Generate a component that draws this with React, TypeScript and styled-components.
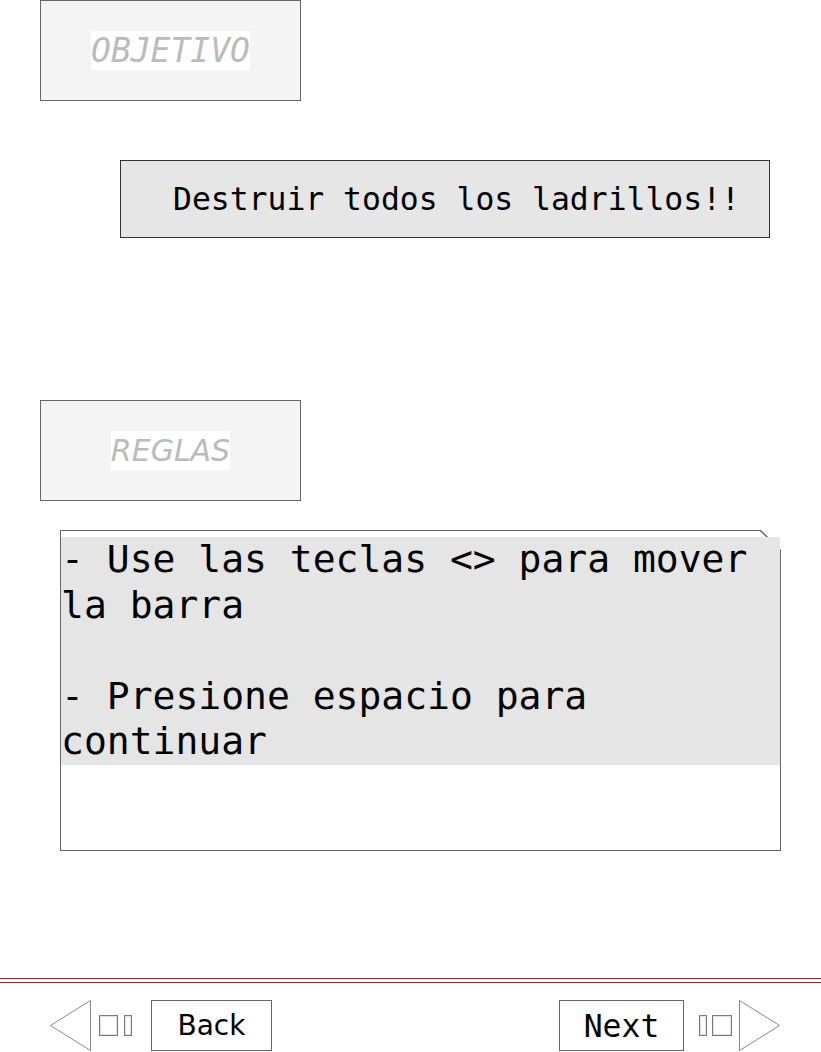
import React from "react";
import styled, { createGlobalStyle } from "styled-components";

const Global = createGlobalStyle`
  html, body { margin: 0; padding: 0; background: #ffffff; }
  body { font-family: "DejaVu Sans Mono", monospace; color: #000; }
`;

const Page = styled.div`
  display: flex;
  flex-direction: column;
  width: 821px;
  height: 1052px;
  overflow: hidden;
`;

const LabelBox = styled.div<{ $top: number }>`
  box-sizing: border-box;
  margin: ${(p) => p.$top}px 0 0 40px;
  width: 261px;
  height: 101px;
  border: 1px solid #666;
  background: #f4f4f4;
  display: flex;
  align-items: center;
  justify-content: center;
`;

const LabelText = styled.span<{ $mono?: boolean }>`
  font-family: ${(p) => (p.$mono ? '"DejaVu Sans Mono", monospace' : '"DejaVu Sans", sans-serif')};
  font-style: italic;
  font-size: ${(p) => (p.$mono ? "33px" : "30px")};
  line-height: 39px;
  color: #bbbbbb;
  background: #ffffff;
  white-space: nowrap;
`;

const GoalBox = styled.div`
  box-sizing: border-box;
  margin: 59px 0 0 120px;
  width: 650px;
  height: 78px;
  border: 1px solid #333;
  background: #e6e6e6;
  display: flex;
  align-items: center;
  padding-left: 52px;
  font-size: 31.4px;
  white-space: nowrap;
`;

const RulesBox = styled.div`
  position: relative;
  box-sizing: border-box;
  margin: 29px 0 0 60px;
  width: 721px;
  height: 321px;
  border: 1px solid #666;
  background: #fff;
`;

const FoldCorner = styled.div`
  position: absolute;
  top: -1px;
  right: -1px;
  width: 21px;
  height: 21px;
  background: linear-gradient(
    to top right,
    transparent calc(50% - 1px),
    #666 calc(50% - 0.5px),
    #666 calc(50% + 0.5px),
    #fff calc(50% + 1px)
  );
`;

const RulesText = styled.div`
  position: relative;
  z-index: 1;
  margin-top: 6px;
  background: #e5e5e5;
  font-size: 38px;
  line-height: 45.6px;
  white-space: pre-wrap;
  color: #000;
`;

const Rule = styled.div`
  margin-top: 127px;
  height: 3px;
  border-top: 1px solid #b11a1a;
  border-bottom: 1px solid #b11a1a;
`;

const Footer = styled.div`
  margin-top: 17px;
  height: 51px;
  display: flex;
  justify-content: space-between;
  align-items: flex-start;
`;

const NavGroup = styled.div<{ $side: "left" | "right" }>`
  display: flex;
  align-items: flex-start;
  padding-left: ${(p) => (p.$side === "left" ? "50px" : "0")};
  padding-right: ${(p) => (p.$side === "right" ? "41px" : "0")};
`;

const Tofu = styled.span<{ $w: number; $ml: number }>`
  box-sizing: border-box;
  display: block;
  margin-top: 15px;
  margin-left: ${(p) => p.$ml}px;
  width: ${(p) => p.$w}px;
  height: 21px;
  border: 1px solid #7a7a7a;
  box-shadow: inset 0 0 0 1px #e0e0e0;
`;

const NavButton = styled.div<{ $w: number; $ml: number; $mono?: boolean }>`
  box-sizing: border-box;
  margin-left: ${(p) => p.$ml}px;
  width: ${(p) => p.$w}px;
  height: 51px;
  border: 1px solid #666;
  background: #fff;
  display: flex;
  align-items: center;
  justify-content: center;
  font-family: ${(p) => (p.$mono ? '"DejaVu Sans Mono", monospace' : '"DejaVu Sans", sans-serif')};
  font-size: ${(p) => (p.$mono ? "31.4px" : "28px")};
  color: #000;
`;

const Arrow = styled.svg<{ $ml: number }>`
  display: block;
  margin-left: ${(p) => p.$ml}px;
  flex: none;
`;

const LeftArrow = () => (
  <Arrow $ml={0} width="41" height="51" viewBox="0 0 41 51">
    <polygon points="40.5,0.5 0.5,25.5 40.5,50.5" fill="none" stroke="#888" strokeWidth="1" />
  </Arrow>
);

const RightArrow = () => (
  <Arrow $ml={7} width="41" height="51" viewBox="0 0 41 51">
    <polygon points="0.5,0.5 40.5,25.5 0.5,50.5" fill="none" stroke="#888" strokeWidth="1" />
  </Arrow>
);

export default function App() {
  return (
    <>
      <Global />
      <Page>
        <LabelBox $top={0}>
          <LabelText $mono>OBJETIVO</LabelText>
        </LabelBox>
        <GoalBox>Destruir todos los ladrillos!!</GoalBox>
        <LabelBox $top={162}>
          <LabelText>REGLAS</LabelText>
        </LabelBox>
        <RulesBox>
          <FoldCorner />
          <RulesText>{"- Use las teclas <> para mover la barra\n\n- Presione espacio para continuar"}</RulesText>
        </RulesBox>
        <Rule />
        <Footer>
          <NavGroup $side="left">
            <LeftArrow />
            <Tofu $w={19} $ml={8} />
            <Tofu $w={8} $ml={6} />
            <NavButton $w={121} $ml={19}>Back</NavButton>
          </NavGroup>
          <NavGroup $side="right">
            <NavButton $w={125} $ml={0} $mono>Next</NavButton>
            <Tofu $w={8} $ml={15} />
            <Tofu $w={20} $ml={5} />
            <RightArrow />
          </NavGroup>
        </Footer>
      </Page>
    </>
  );
}
